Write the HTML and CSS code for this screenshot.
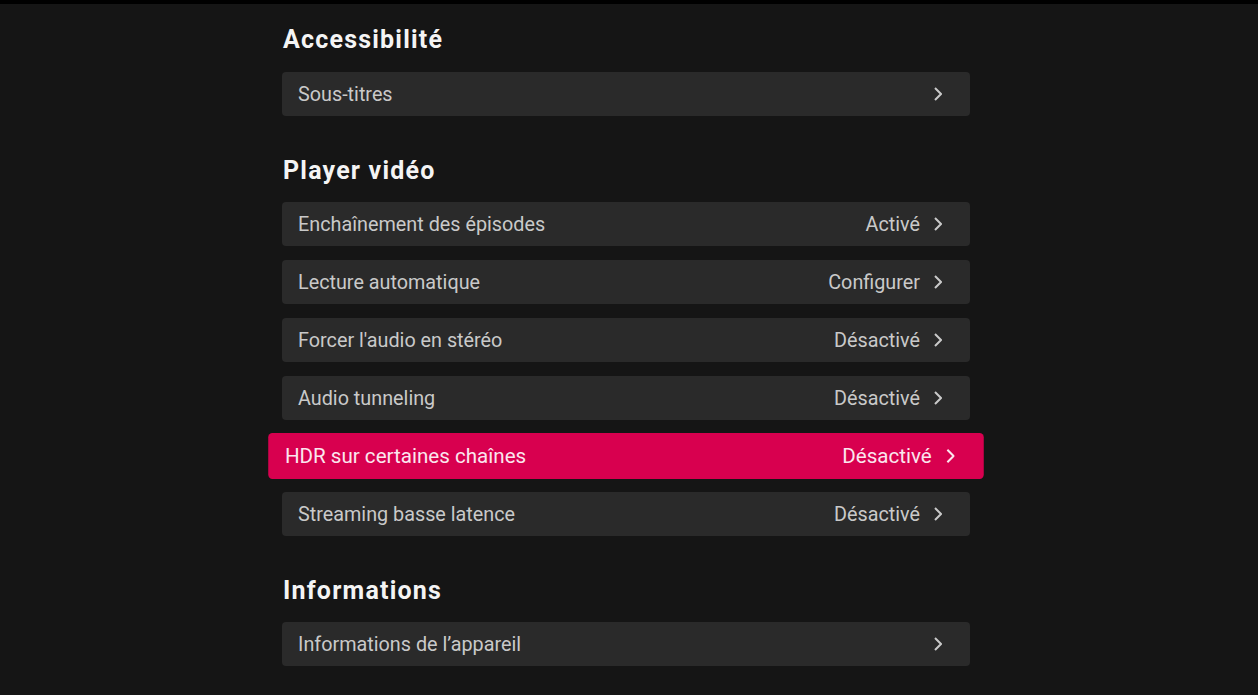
FILE: index.html
```html
<!DOCTYPE html>
<html lang="fr">

<head>
  <meta charset="UTF-8">
  <meta name="viewport" content="width=device-width, initial-scale=1.0">
  <title>Paramètres</title>
  <link rel="stylesheet" href="styles.css">
</head>

<body>
  <div class="settings">
    <section class="section">
      <h2>Accessibilité</h2>
      <div class="list">
        <div class="row">
          <span class="label">Sous-titres</span>
          <span class="value"><svg class="chev" viewBox="0 0 8 14"><path d="M1 1l6 6-6 6" /></svg></span>
        </div>
      </div>
    </section>

    <section class="section">
      <h2>Player vidéo</h2>
      <div class="list">
        <div class="row">
          <span class="label">Enchaînement des épisodes</span>
          <span class="value">Activé<svg class="chev" viewBox="0 0 8 14"><path d="M1 1l6 6-6 6" /></svg></span>
        </div>
        <div class="row">
          <span class="label">Lecture automatique</span>
          <span class="value">Configurer<svg class="chev" viewBox="0 0 8 14"><path d="M1 1l6 6-6 6" /></svg></span>
        </div>
        <div class="row">
          <span class="label">Forcer l'audio en stéréo</span>
          <span class="value">Désactivé<svg class="chev" viewBox="0 0 8 14"><path d="M1 1l6 6-6 6" /></svg></span>
        </div>
        <div class="row">
          <span class="label">Audio tunneling</span>
          <span class="value">Désactivé<svg class="chev" viewBox="0 0 8 14"><path d="M1 1l6 6-6 6" /></svg></span>
        </div>
        <div class="row focused">
          <span class="label">HDR sur certaines chaînes</span>
          <span class="value">Désactivé<svg class="chev" viewBox="0 0 8 14"><path d="M1 1l6 6-6 6" /></svg></span>
        </div>
        <div class="row">
          <span class="label">Streaming basse latence</span>
          <span class="value">Désactivé<svg class="chev" viewBox="0 0 8 14"><path d="M1 1l6 6-6 6" /></svg></span>
        </div>
      </div>
    </section>

    <section class="section">
      <h2>Informations</h2>
      <div class="list">
        <div class="row">
          <span class="label">Informations de l’appareil</span>
          <span class="value"><svg class="chev" viewBox="0 0 8 14"><path d="M1 1l6 6-6 6" /></svg></span>
        </div>
      </div>
    </section>
  </div>
</body>

</html>
```

FILE: styles.css
```css
body {
  margin: 0;
  padding: 0;
  height: 695px;
  overflow: hidden;
  background-color: #151515;
  border-top: 4px solid #000;
  box-sizing: border-box;
  font-family: Roboto, "Noto Sans", sans-serif;
}

.settings {
  width: 688px;
  margin-left: 282px;
  padding-top: 21px;
  display: flex;
  flex-direction: column;
  gap: 40px;
}

.section h2 {
  margin: 0 0 16px 1px;
  font-size: 25px;
  line-height: 30px;
  font-weight: 700;
  letter-spacing: 1.2px;
  color: #f4f4f4;
}

.section:first-child h2 {
  margin-bottom: 17px;
}

.list {
  display: flex;
  flex-direction: column;
  gap: 14px;
}

.row {
  height: 44px;
  display: flex;
  align-items: center;
  justify-content: space-between;
  padding: 0 28px 0 16px;
  background: #2a2a2a;
  border-radius: 4px;
  color: #c9c9c9;
  font-size: 19.8px;
}

.value {
  display: flex;
  align-items: center;
  gap: 14px;
}

.chev {
  width: 8px;
  height: 14px;
  fill: none;
  stroke: currentColor;
  stroke-width: 2;
}

.focused {
  background: #d8004f;
  color: #fbe6ee;
  transform: scale(1.04);
}
```
